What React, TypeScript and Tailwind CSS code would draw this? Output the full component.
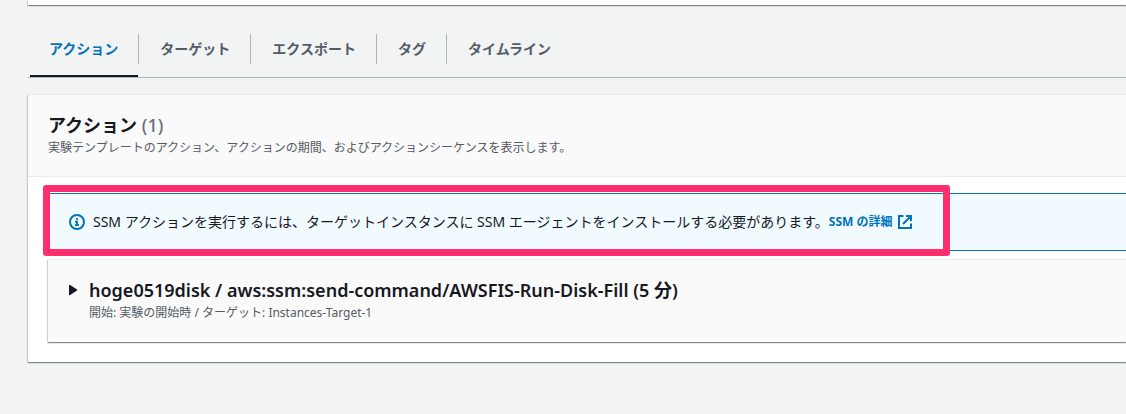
import { clsx } from 'clsx'
import type { ReactNode } from 'react'

const tabs = ['アクション', 'ターゲット', 'エクスポート', 'タグ', 'タイムライン']

const App = () => (
  <div className="min-h-screen overflow-hidden bg-[#f2f3f3] pb-12 pl-7 font-['Noto_Sans','Noto_Sans_CJK_JP',sans-serif] text-sm text-[#16191f]">
    <Card className="h-[5px]" />
    <Tabs />
    <Card className="mt-4 border-t border-[#eaeded]">
      <header className="border-b border-[#eaeded] bg-[#fafafa] px-5 pt-[18px] pb-[17px]">
        <h2 className="text-lg leading-6 font-bold">
          アクション <span className="font-medium text-[#687078]">(1)</span>
        </h2>
        <p className="text-xs leading-[22px] text-[#545b64]">
          実験テンプレートのアクション、アクションの期間、およびアクションシーケンスを表示します。
        </p>
      </header>
      <div className="space-y-2 pt-4 pb-5 pl-5">
        <Notice />
        <ActionItem />
      </div>
    </Card>
  </div>
)

export default App

const Card = ({ className, children }: { className?: string; children?: ReactNode }) => (
  <section
    className={clsx(
      'bg-white shadow-[0_1px_1px_0_rgba(0,28,36,0.3),1px_1px_1px_0_rgba(0,28,36,0.15),-1px_1px_1px_0_rgba(0,28,36,0.15)]',
      className,
    )}
  >
    {children}
  </section>
)

const Tabs = () => (
  <div role="tablist" className="flex border-b border-[#aab7b8] pt-[29px]">
    {tabs.map((tab, i) => (
      <button
        key={tab}
        type="button"
        role="tab"
        aria-selected={i === 0}
        className={clsx(
          'relative pb-[13px] font-bold',
          i === 0
            ? 'text-[#0073bb] after:absolute after:right-px after:bottom-0 after:left-0.5 after:h-0.5 after:bg-[#16191f]'
            : 'text-[#545b64]',
        )}
      >
        <span
          className={clsx(
            'block h-[30px] pr-5 pl-[21px] leading-[30px]',
            i < tabs.length - 1 && 'border-r border-[#aab7b8]',
          )}
        >
          {tab}
        </span>
      </button>
    ))}
  </div>
)

const Notice = () => (
  <div className="relative flex items-center border border-r-0 border-[#0073bb] bg-[#f1faff] py-[18px] pl-5">
    <InfoIcon />
    <p className="ml-2 leading-5">SSM アクションを実行するには、ターゲットインスタンスに SSM エージェントをインストールする必要があります。</p>
    <a href="#ssm" className="flex items-center gap-1 text-xs font-bold text-[#0073bb]">
      SSM の詳細
      <ExternalIcon />
    </a>
    <div className="pointer-events-none absolute -top-[9px] -left-[6px] h-[71px] w-[907px] rounded-[3px] border-[7px] border-[#ff2e6c]" />
  </div>
)

const ActionItem = () => (
  <Card className="border-t border-[#eaeded]">
    <button
      type="button"
      aria-expanded={false}
      className="flex w-full items-start gap-2.5 bg-[#fafafa] pt-[18px] pb-[18px] pl-5 text-left"
    >
      <svg viewBox="0 0 11 12" className="mt-1.5 h-3 w-[11px]" fill="#16191f">
        <path d="M1 1.2Q1 .5 1.8 .8L9 5.4Q9.8 6 9 6.6L1.8 11.2Q1 11.5 1 10.8Z" />
      </svg>
      <span>
        <span className="block text-lg leading-6 font-semibold">
          hoge0519disk / aws:ssm:send-command/AWSFIS-Run-Disk-Fill (5 分)
        </span>
        <span className="block text-xs leading-[22px] text-[#545b64]">
          開始: 実験の開始時 / ターゲット: Instances-Target-1
        </span>
      </span>
    </button>
  </Card>
)

const InfoIcon = () => (
  <svg viewBox="0 0 16 16" className="size-4" fill="none" stroke="#0073bb" strokeWidth="2">
    <circle cx="8" cy="8" r="7" />
    <path d="M8 4v2M6 7.7h2V11M6 11.2h4" strokeWidth="1.8" />
  </svg>
)

const ExternalIcon = () => (
  <svg viewBox="0 0 16 16" className="size-4" fill="none" stroke="#0073bb" strokeWidth="2">
    <path d="M6.5 2H2v12h12V9.5M9 2h5v5M14 2 6 10" />
  </svg>
)
